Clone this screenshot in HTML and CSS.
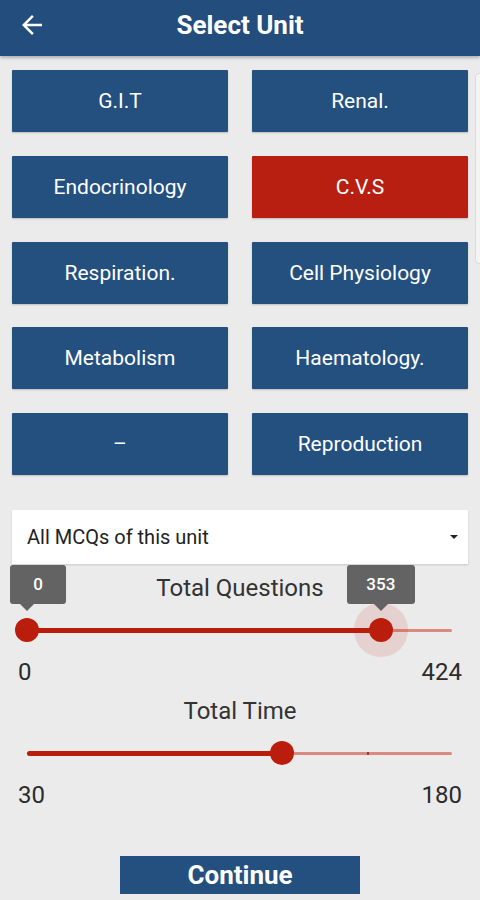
FILE: index.html
```html
<!DOCTYPE html>
<html lang="en">
<head>
    <meta charset="UTF-8">
    <meta name="viewport" content="width=device-width, initial-scale=1.0">
    <title>Select Unit</title>

    <!-- CSS da página -->
    <link rel="stylesheet" href="styles.css">
</head>
<body>

    <!-- Cabeçalho -->
    <header class="topbar">
        <a href="#" class="back" aria-label="Back">
            <svg width="30" height="30" viewBox="0 0 24 24">
                <path fill="#ffffff" d="M20 11H7.83l5.59-5.59L12 4l-8 8 8 8 1.41-1.41L7.83 13H20v-2z"/>
            </svg>
        </a>
        <h1>Select Unit</h1>
    </header>

    <!-- painel lateral (borda visível) -->
    <div class="edge-panel"></div>

    <!-- Unidades -->
    <div class="units">
        <button class="unit">G.I.T</button>
        <button class="unit">Renal.</button>
        <button class="unit">Endocrinology</button>
        <button class="unit active">C.V.S</button>
        <button class="unit">Respiration.</button>
        <button class="unit">Cell Physiology</button>
        <button class="unit">Metabolism</button>
        <button class="unit">Haematology.</button>
        <button class="unit">–</button>
        <button class="unit">Reproduction</button>
    </div>

    <!-- Tipo de questões -->
    <div class="select">
        <span>All MCQs of this unit</span>
        <span class="caret"></span>
    </div>

    <!-- Total de questões -->
    <div class="slider-block">
        <p class="slider-label">Total Questions</p>
        <div class="track">
            <div class="rail">
                <div class="rail-fill" style="width: 83.25%"></div>
            </div>
            <div class="thumb" style="left: 0%">
                <div class="tip tip-start">0</div>
            </div>
            <div class="thumb focused" style="left: 83.25%">
                <div class="tip">353</div>
            </div>
        </div>
        <div class="range">
            <span>0</span>
            <span>424</span>
        </div>
    </div>

    <!-- Tempo total -->
    <div class="slider-block">
        <p class="slider-label">Total Time</p>
        <div class="track">
            <div class="rail">
                <div class="rail-fill" style="width: 60%"></div>
                <span class="tick" style="left: 80%"></span>
            </div>
            <div class="thumb" style="left: 60%"></div>
        </div>
        <div class="range">
            <span>30</span>
            <span>180</span>
        </div>
    </div>

    <div class="actions">
        <button class="continue">Continue</button>
    </div>

</body>
</html>
```

FILE: styles.css
```css
body {
    font-family: Roboto, "Noto Sans", sans-serif;
    margin: 0;
    padding: 0;
    background-color: #ebebeb;
    color: #2b2b2b;
    position: relative;
    overflow: hidden;
}

/* Cabeçalho */
.topbar {
    position: relative;
    height: 56px;
    background-color: #234d7c;
    display: flex;
    align-items: center;
    justify-content: center;
    box-shadow: 0 2px 3px rgba(0, 0, 0, 0.25);
}

.topbar h1 {
    margin: 0 0 6px;
    font-size: 26px;
    font-weight: 700;
    color: #ffffff;
}

.back {
    position: absolute;
    left: 17px;
    top: 10px;
    display: block;
    height: 30px;
}

.edge-panel {
    position: absolute;
    left: 475px;
    top: 73px;
    width: 12px;
    height: 189px;
    background-color: #f4f4f4;
    border: 1px solid #dcdcdc;
    border-radius: 4px;
}

/* Unidades */
.units {
    display: grid;
    grid-template-columns: 1fr 1fr;
    column-gap: 24px;
    row-gap: 23.75px;
    padding: 14px 12px 0;
}

.unit {
    height: 62px;
    border: none;
    border-radius: 1px;
    background-color: #24507f;
    color: #ffffff;
    font-family: inherit;
    font-size: 21px;
    box-shadow: 0 1px 2px rgba(0, 0, 0, 0.2);
}

.unit.active {
    background-color: #b81f10;
}

/* Select */
.select {
    margin: 35px 12px 0;
    height: 54px;
    background-color: #ffffff;
    display: flex;
    align-items: center;
    justify-content: space-between;
    padding: 0 10px 0 15px;
    font-size: 20px;
    color: #222;
    box-shadow: 0 1px 2px rgba(0, 0, 0, 0.15);
}

.caret {
    width: 0;
    height: 0;
    border-left: 4px solid transparent;
    border-right: 4px solid transparent;
    border-top: 4px solid #222;
}

/* Sliders */
.slider-block {
    margin-top: 9px;
}

.slider-label {
    margin: 0;
    text-align: center;
    font-size: 24px;
    line-height: 30px;
    color: #333;
}

.track {
    position: relative;
    height: 54px;
    margin: 0 28px 0 27px;
}

.rail {
    position: absolute;
    left: 0;
    right: 0;
    top: 26px;
    height: 3px;
    border-radius: 2px;
    background-color: #dc8a80;
}

.rail-fill {
    position: absolute;
    left: 0;
    top: -1px;
    height: 5px;
    border-radius: 3px;
    background-color: #bb1d0d;
}

.tick {
    position: absolute;
    top: 0;
    width: 2px;
    height: 3px;
    background-color: #9a3a30;
}

.thumb {
    position: absolute;
    top: 27px;
    width: 24px;
    height: 24px;
    margin: -12px 0 0 -12px;
    border-radius: 50%;
    background-color: #bb1d0d;
}

.thumb.focused {
    box-shadow: 0 0 0 15px rgba(187, 29, 13, 0.12);
}

.tip {
    position: absolute;
    left: 12px;
    bottom: 38px;
    transform: translateX(-50%);
    min-width: 68px;
    height: 39px;
    line-height: 39px;
    border-radius: 3px;
    background-color: #636363;
    color: #ffffff;
    font-size: 17px;
    font-weight: 500;
    text-align: center;
}

.tip::after {
    content: "";
    position: absolute;
    left: 50%;
    bottom: -7px;
    margin-left: -7px;
    border-left: 7px solid transparent;
    border-right: 7px solid transparent;
    border-top: 7px solid #636363;
}

.tip-start {
    min-width: 56px;
    transform: translateX(-17px);
}

.tip-start::after {
    left: 17px;
}

.range {
    display: flex;
    justify-content: space-between;
    padding: 0 18px;
    font-size: 24px;
    line-height: 30px;
    color: #2b2b2b;
}

/* Botão continuar */
.actions {
    display: flex;
    justify-content: center;
    margin-top: 46px;
}

.continue {
    width: 240px;
    height: 38px;
    border: none;
    background-color: #24507f;
    color: #ffffff;
    font-family: inherit;
    font-size: 26px;
    font-weight: 700;
    padding: 0;
}
```
